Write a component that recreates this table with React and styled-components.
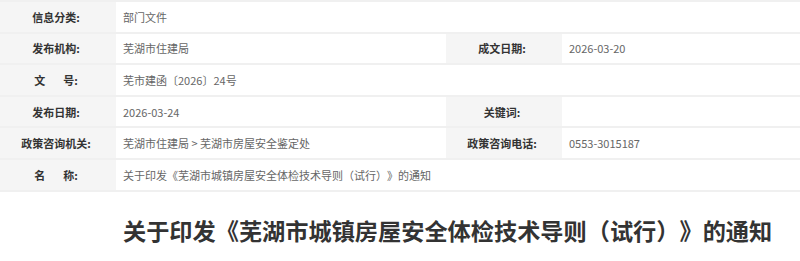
import React from "react";
import styled, { createGlobalStyle } from "styled-components";

const GlobalStyle = createGlobalStyle`
	body {
		margin: 0;
		background: #ffffff;
		font-family: "Noto Sans CJK SC", "Noto Sans", sans-serif;
		text-spacing-trim: space-all;
	}
`;

const Table = styled.div`
	width: 800px;
	border-top: 2px solid #f0f0f0;
`;

// A row holds either one label/value pair or two of them.
const Row = styled.div`
	display: grid;
	grid-template-columns: ${ props => props.pairs ? "116px 330px 116px 1fr" : "116px 1fr" };
	height: 31.6px;
	box-sizing: border-box;
	border-bottom: 2px solid #f0f0f0;
`;

const Label = styled.div`
	display: flex;
	align-items: center;
	justify-content: center;
	background: #f5f5f5;
	color: #333333;
	font-size: 11px;
	font-weight: 700;
	padding-right: 4px;
`;

const Value = styled.div`
	display: flex;
	align-items: center;
	padding-left: 7px;
	color: #666666;
	font-size: 11px;
`;

const Gap = styled.span`
	display: inline-block;
	width: ${ props => props.w }px;
`;

const Title = styled.h1`
	margin: 23px 0 0;
	padding-left: 123px;
	font-size: 23.2px;
	line-height: 30px;
	font-weight: 700;
	color: #333333;
	white-space: nowrap;
`;

export default function App() {
	return (
		<>
			<GlobalStyle />
			<Table>
				<Row>
					<Label>信息分类:</Label>
					<Value>部门文件</Value>
				</Row>
				<Row pairs>
					<Label>发布机构:</Label>
					<Value>芜湖市住建局</Value>
					<Label>成文日期:</Label>
					<Value>2026-03-20</Value>
				</Row>
				<Row>
					<Label>文<Gap w={ 18 } />号:</Label>
					<Value>芜市建函〔2026〕24号</Value>
				</Row>
				<Row pairs>
					<Label>发布日期:</Label>
					<Value>2026-03-24</Value>
					<Label>关键词:</Label>
					<Value />
				</Row>
				<Row pairs>
					<Label>政策咨询机关:</Label>
					<Value>芜湖市住建局 &gt; 芜湖市房屋安全鉴定处</Value>
					<Label>政策咨询电话:</Label>
					<Value>0553-3015187</Value>
				</Row>
				<Row>
					<Label>名<Gap w={ 18 } />称:</Label>
					<Value>关于印发《芜湖市城镇房屋安全体检技术导则（试行）》的通知</Value>
				</Row>
			</Table>
			<Title>关于印发《芜湖市城镇房屋安全体检技术导则（试行）》的通知</Title>
		</>
	);
}
